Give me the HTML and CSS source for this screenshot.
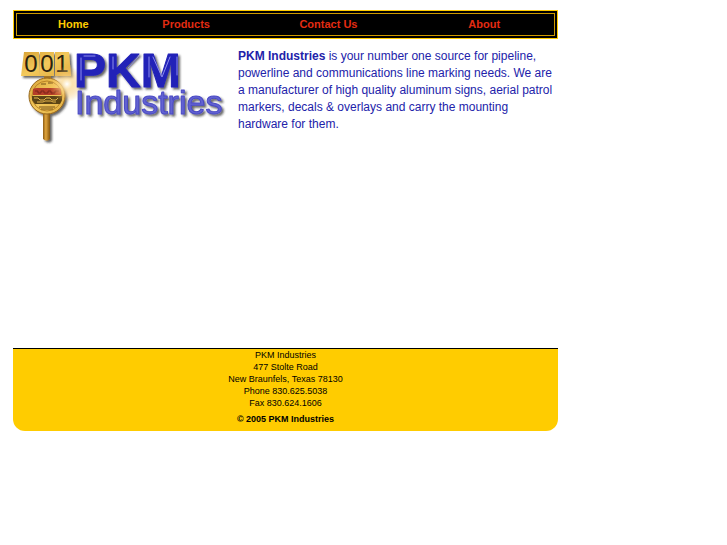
FILE: index.html
```
<!DOCTYPE html>
<html lang="en">
<head>
    <meta charset="UTF-8">
    <meta name="viewport" content="width=device-width, initial-scale=1.0">
    <title>PKM Industries</title>
    <link rel="stylesheet" href="styles.css">
</head>
<body>
    <div class="container">
        <nav class="nav">
            <ul class="menu">
                <li class="home"><a class="active" href="#">Home</a></li>
                <li class="products"><a href="#">Products</a></li>
                <li class="contact"><a href="#">Contact Us</a></li>
                <li class="about"><a href="#">About</a></li>
            </ul>
        </nav>
        <main class="content">
            <svg class="logo" viewBox="0 0 214 100" role="img" aria-label="PKM Industries">
                <defs>
                    <linearGradient id="plate" x1="0" y1="0" x2="1" y2="1">
                        <stop offset="0" stop-color="#d9a437"/>
                        <stop offset="0.5" stop-color="#f3c95c"/>
                        <stop offset="1" stop-color="#e0ad40"/>
                    </linearGradient>
                    <linearGradient id="post" x1="0" x2="1" y1="0" y2="0">
                        <stop offset="0" stop-color="#8d5c14"/>
                        <stop offset="0.4" stop-color="#e0a53c"/>
                        <stop offset="1" stop-color="#85540f"/>
                    </linearGradient>
                    <radialGradient id="glow">
                        <stop offset="0" stop-color="#fff"/>
                        <stop offset="0.3" stop-color="#fbdc9c" stop-opacity="0.8"/>
                        <stop offset="1" stop-color="#f6b956" stop-opacity="0"/>
                    </radialGradient>
                    <filter id="shadow" x="-10%" y="-10%" width="125%" height="130%">
                        <feDropShadow dx="2" dy="2" stdDeviation="1.3" flood-color="#222" flood-opacity="0.7"/>
                    </filter>
                </defs>
                <!-- marker post -->
                <g filter="url(#shadow)">
                    <path d="M24 62h7v29q-3 3-7 0z" fill="url(#post)"/>
                    <path d="M25 28h7v5h-7z" fill="#a87827"/>
                    <circle cx="28" cy="48" r="18" fill="url(#plate)" stroke="#94651c"/>
                    <path d="M5 4h15v24H2zM21 4h14v24H20zM36 4h14l2 24H36z" fill="url(#plate)"/>
                </g>
                <circle cx="28" cy="48" r="15" fill="none" stroke="#b98325"/>
                <path d="M14 41q2-1 4-1h21q2 0 3 1v6H14z" fill="#b53d28"/>
                <path d="M13 48h30v4l-2 4H16l-3-4z" fill="#5b4416"/>
                <path d="M22 36h5m2-1h5M20 59h16M22 61h12" stroke="#765319" stroke-width="1"/>
                <path d="M16 43h3v2h3v-2h3v2h4v-2h3v2h4v-2h4" fill="none" stroke="#7a2518"/>
                <path d="M15 50h4l2 2h4l2-2h4l2 2h4l2-2M18 54h6l2-1h6l2 1h3" fill="none" stroke="#e3b34a"/>
                <g class="digits">
                    <text x="12" y="24">0</text>
                    <text x="28" y="24">0</text>
                    <text x="43" y="24">1</text>
                </g>
                <circle cx="48" cy="36" r="18" fill="url(#glow)"/>
                <g filter="url(#shadow)">
                    <text class="brand" x="55" y="39">PKM</text>
                    <text class="sub" x="56" y="66">Industries</text>
                </g>
                <!-- highlights on the letters -->
                <path class="shine" d="M62 10v22M65 8h11M94 9v12M120 8l-11 12M130 9v20M134 9l9 20 8-20M158 9v18"/>
            </svg>
            <p class="intro"><strong>PKM Industries</strong> is your number one source for pipeline, powerline and communications line marking needs. We are a manufacturer of high quality aluminum signs, aerial patrol markers, decals &amp; overlays and carry the mounting hardware for them.</p>
        </main>
        <footer class="footer">
            <address>
                PKM Industries<br>
                477 Stolte Road<br>
                New Braunfels, Texas 78130<br>
                Phone 830.625.5038<br>
                Fax 830.624.1606
            </address>
            <p class="copy">&copy; 2005 PKM Industries</p>
        </footer>
    </div>
</body>
</html>
```
FILE: styles.css
```
*{
    padding: 0;
    margin: 0;
    box-sizing: border-box;
}
body{
    background-color: #fff;
    font-family: "Liberation Sans", Arial, sans-serif;
    font-size: 12px;
    padding: 10px 13px;
}
.container{
    width: 545px;
    max-width: 100%;
}
.nav{
    background-color: #000;
    border: 1px solid #fc0;
    padding: 2px;
}
.menu{
    display: flex;
    list-style: none;
    border: 1px solid #c90;
    padding: 3px 0;
}
.menu li{
    width: 21%;
    text-align: center;
    line-height: 15px;
}
.menu .contact{
    width: 32%;
}
.menu .about{
    width: 26%;
}
.menu a{
    color: #e32b12;
    font-size: 11px;
    font-weight: bold;
    text-decoration: none;
}
.menu a.active{
    color: #fc0;
}
.content{
    display: flex;
    align-items: flex-start;
    gap: 5px;
    min-height: 309px;
    padding: 9px 2px 0 6px;
}
.logo{
    flex: none;
    width: 214px;
    height: 100px;
    overflow: visible;
}
.digits{
    font-size: 24px;
    text-anchor: middle;
    fill: #2b220f;
}
.brand{
    font-size: 48px;
    font-weight: bold;
    fill: #2222b8;
    stroke: #2222b8;
    stroke-width: 1px;
    stroke-linejoin: round;
}
.sub{
    font-size: 34px;
    fill: #6262d2;
    stroke: #4a4ac4;
    stroke-width: 1px;
    stroke-linejoin: round;
}
.shine{
    fill: none;
    stroke: #8d8dee;
    stroke-width: 1px;
    stroke-linecap: round;
}
.intro{
    color: #22a;
    line-height: 17px;
}
.footer{
    background-color: #fc0;
    border-top: 1px solid #000;
    border-radius: 0 0 12px 12px;
    color: #000;
    font-size: 9px;
    line-height: 12px;
    text-align: center;
    padding-bottom: 6px;
}
.footer address{
    font-style: normal;
}
.copy{
    font-weight: bold;
    margin-top: 4px;
}
```
